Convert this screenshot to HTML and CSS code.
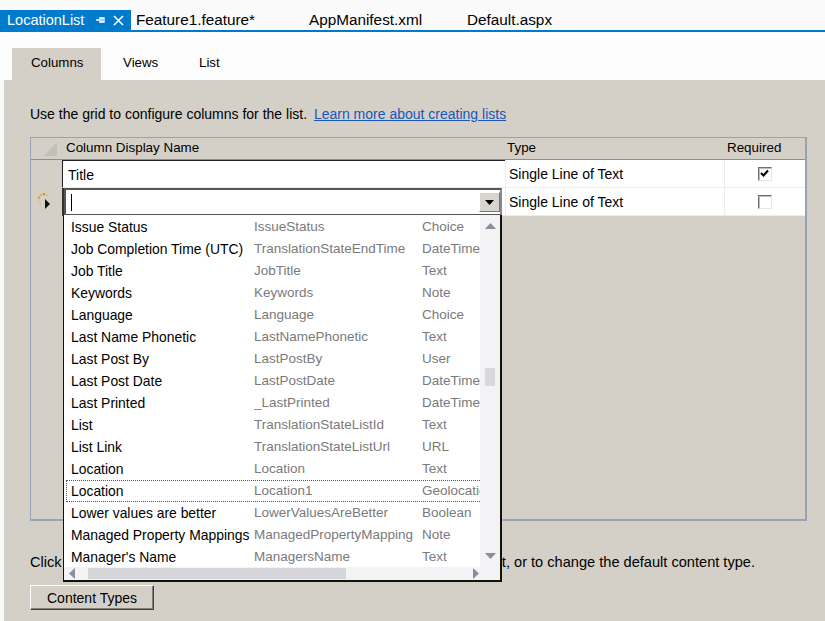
FILE: index.html
```html
<!DOCTYPE html>
<html>
<head>
<meta charset="utf-8">
<link rel="stylesheet" href="styles.css">
</head>
<body>
<div class="doc-tabs">
  <div class="doc-tab active">
    <span class="doc-title">LocationList</span>
    <svg class="pin" width="11" height="10" viewBox="0 0 11 10"><path d="M1 5h4M5 2v6M5 3h4v4H5M7 3v4" stroke="#fff" stroke-width="1.3" fill="none"/></svg>
    <svg class="close" width="13" height="13" viewBox="0 0 13 13"><path d="M2 2l9 9M11 2l-9 9" stroke="#fff" stroke-width="1.6"/></svg>
  </div>
  <div class="doc-tab t2">Feature1.feature*</div>
  <div class="doc-tab t3">AppManifest.xml</div>
  <div class="doc-tab t4">Default.aspx</div>
</div>
<div class="subtabs">
  <div class="subtab active">Columns</div>
  <div class="subtab views">Views</div>
  <div class="subtab list">List</div>
</div>
<div class="panel">
  <p class="intro">Use the grid to configure columns for the list. <a class="link">Learn more about creating lists</a></p>
  <div class="grid">
    <div class="grow header">
      <div class="c-ind"><svg width="14" height="14" viewBox="0 0 14 14"><polygon points="13,0 13,14 0,14" fill="#c2c0bb"/></svg></div>
      <div class="c-name">Column Display Name</div>
      <div class="c-type">Type</div>
      <div class="c-req">Required</div>
    </div>
    <div class="grow row">
      <div class="c-ind"></div>
      <div class="c-name title-cell">Title</div>
      <div class="c-type">Single Line of Text</div>
      <div class="c-req"><span class="chk"><svg width="11" height="11" viewBox="0 0 11 11"><path d="M2 5l2.5 2.5L9 2.5" stroke="#000" stroke-width="2" fill="none"/></svg></span></div>
    </div>
    <div class="grow row">
      <div class="c-ind">
        <svg class="newrow" width="16" height="18" viewBox="0 0 16 18">
          <circle cx="5" cy="3" r="1.2" fill="#d9b54a"/>
          <circle cx="8" cy="2.2" r="1.2" fill="#c99a30"/>
          <circle cx="11" cy="3.2" r="1.1" fill="#e0c070"/>
          <circle cx="3" cy="5.5" r="1.2" fill="#c9a040"/>
          <circle cx="2.5" cy="8.5" r="1.1" fill="#e2c780"/>
          <circle cx="4" cy="11" r="1" fill="#d8bd70"/>
          <circle cx="7" cy="5.5" r="1" fill="#e8d7a0"/>
          <polygon points="9,7 9,17 14,12" fill="#111"/>
        </svg>
      </div>
      <div class="c-name edit-cell">
        <div class="combo">
          <span class="caret"></span>
          <span class="combo-btn"><svg width="9" height="5" viewBox="0 0 9 5"><polygon points="0,0 9,0 4.5,5" fill="#000"/></svg></span>
        </div>
        <div class="dropdown">
          <div class="dd-body">
            <ul class="dd-list">
              <li><span>Issue Status</span><span>IssueStatus</span><span>Choice</span></li>
              <li><span>Job Completion Time (UTC)</span><span>TranslationStateEndTime</span><span>DateTime</span></li>
              <li><span>Job Title</span><span>JobTitle</span><span>Text</span></li>
              <li><span>Keywords</span><span>Keywords</span><span>Note</span></li>
              <li><span>Language</span><span>Language</span><span>Choice</span></li>
              <li><span>Last Name Phonetic</span><span>LastNamePhonetic</span><span>Text</span></li>
              <li><span>Last Post By</span><span>LastPostBy</span><span>User</span></li>
              <li><span>Last Post Date</span><span>LastPostDate</span><span>DateTime</span></li>
              <li><span>Last Printed</span><span>_LastPrinted</span><span>DateTime</span></li>
              <li><span>List</span><span>TranslationStateListId</span><span>Text</span></li>
              <li><span>List Link</span><span>TranslationStateListUrl</span><span>URL</span></li>
              <li><span>Location</span><span>Location</span><span>Text</span></li>
              <li class="focus"><span>Location</span><span>Location1</span><span>Geolocation</span></li>
              <li><span>Lower values are better</span><span>LowerValuesAreBetter</span><span>Boolean</span></li>
              <li><span>Managed Property Mappings</span><span>ManagedPropertyMapping</span><span>Note</span></li>
              <li><span>Manager's Name</span><span>ManagersName</span><span>Text</span></li>
            </ul>
            <div class="vscroll">
              <svg width="11" height="6" viewBox="0 0 11 6"><polygon points="0,6 11,6 5.5,0" fill="#8c8c9c"/></svg>
              <div class="vtrack"><span class="vthumb"></span></div>
              <svg width="11" height="6" viewBox="0 0 11 6"><polygon points="0,0 11,0 5.5,6" fill="#8c8c9c"/></svg>
            </div>
          </div>
          <div class="hscroll">
            <svg width="6" height="11" viewBox="0 0 6 11"><polygon points="6,0 6,11 0,5.5" fill="#8c8c9c"/></svg>
            <div class="htrack"><span class="hthumb"></span></div>
            <svg width="6" height="11" viewBox="0 0 6 11"><polygon points="0,0 0,11 6,5.5" fill="#8c8c9c"/></svg>
            <span class="corner"></span>
          </div>
        </div>
      </div>
      <div class="c-type">Single Line of Text</div>
      <div class="c-req"><span class="chk"></span></div>
    </div>
  </div>
  <p class="outro">Click Content Types to add or delete content types associated with the list, or to change the default content type.</p>
  <button class="btn">Content Types</button>
</div>
</body>
</html>
```
FILE: styles.css
```css
* { box-sizing: border-box; }
html, body { margin: 0; padding: 0; }
body {
  width: 825px;
  height: 621px;
  overflow: hidden;
  background: #fafafa;
  font-family: "Liberation Sans", Arial, sans-serif;
  font-size: 14px;
  color: #000;
}
.doc-tabs {
  display: flex;
  height: 32px;
  padding-top: 10px;
  border-bottom: 2px solid #007acc;
  font-size: 15.3px;
}
.doc-tab {
  height: 20px;
  line-height: 20px;
  white-space: nowrap;
}
.doc-tab.active {
  background: #007acc;
  color: #fff;
  width: 131px;
  padding-left: 7px;
  display: flex;
  align-items: center;
}
.doc-title { width: 88px; font-size: 14.5px; }
.pin { margin-right: 6px; }
.t2 { margin-left: 5px; width: 173px; }
.t3 { width: 158px; }
.subtabs {
  display: flex;
  padding: 16px 0 0 12px;
  height: 48px;
  background: #fcfcfc;
}
.subtab {
  height: 32px;
  line-height: 30px;
  font-size: 13.3px;
}
.subtab.active {
  background: #d4d0c8;
  width: 89px;
  padding-left: 19px;
}
.subtab.views { padding-left: 22px; width: 98px; }
.panel {
  margin-left: 4px;
  height: 541px;
  background: #d4d0c8;
  padding: 24px 18px 0 26px;
  display: flex;
  flex-direction: column;
  align-items: flex-start;
}
.intro {
  margin: 0;
  height: 20px;
  line-height: 20px;
  font-size: 14px;
}
.link {
  color: #1a55b8;
  text-decoration: underline;
  margin-left: 3px;
}
.grid {
  margin-top: 13px;
  width: 777px;
  height: 384px;
  border: 1px solid #98a2b4;
  border-width: 1px 2px 2px 1px;
  display: flex;
  flex-direction: column;
}
.grow { display: flex; }
.c-ind { width: 31px; flex: none; position: relative; }
.c-name { width: 443px; flex: none; position: relative; }
.c-type { width: 219px; flex: none; }
.c-req { flex: 1; }
.header { height: 22px; line-height: 20px; border-bottom: 1px solid #8e8e8e; font-size: 13.4px; }
.header .c-ind { display: flex; justify-content: flex-end; align-items: flex-end; padding: 0 4px 3px 0; }
.header .c-name { padding-left: 4px; }
.header .c-type { padding-left: 2px; }
.header .c-req { padding-left: 3px; }
.row { height: 28px; line-height: 28px; }
.row .c-name, .row .c-type, .row .c-req { background: #fff; border-bottom: 1px solid #ececec; }
.row .c-type { padding-left: 3px; border-left: 1px solid #ececec; }
.row .c-req { border-left: 1px solid #ececec; display: flex; justify-content: center; align-items: center; }
.title-cell { padding-left: 5px; border-left: 1px solid #222; border-top: 1px solid #222; }
.edit-cell { border-left: 2px solid #333; }
.combo {
  position: absolute;
  left: 0; top: 0;
  width: 438px; height: 28px;
  border: 2px solid #555;
  border-right-color: #888;
  background: #fff;
  display: flex;
  align-items: center;
  justify-content: space-between;
}
.caret { width: 1px; height: 17px; background: #000; margin-left: 5px; }
.combo-btn {
  width: 21px; height: 20px;
  background: #d8d5cf;
  border: 1px solid;
  border-color: #fff #777 #777 #fff;
  display: flex; align-items: center; justify-content: center;
}
.chk {
  width: 14px; height: 14px;
  background: #fff;
  border: 1px solid;
  border-color: #6e6e6e #e6e6e6 #e6e6e6 #6e6e6e;
  box-shadow: inset 1px 1px 0 #bdbdbd;
  display: flex; align-items: center; justify-content: center;
  margin-right: 1px;
}
.newrow { position: absolute; left: 5px; top: 4px; }
.dropdown {
  position: absolute;
  left: -1px; top: 27px;
  width: 439px; height: 367px;
  background: #fff;
  border: 1px solid #111;
  border-width: 0 2px 2px 1px;
  display: flex;
  flex-direction: column;
  z-index: 5;
}
.dd-body { display: flex; height: 352px; }
.dd-list {
  list-style: none;
  margin: 0; padding: 1px 0 0 2px;
  width: 416px;
  overflow: hidden;
}
.dd-list li {
  display: flex;
  height: 22px;
  line-height: 22px;
  padding-left: 5px;
  white-space: nowrap;
  font-size: 13.9px;
}
.dd-list li span:nth-child(1) { width: 183px; flex: none; }
.dd-list li span:nth-child(2) { width: 168px; flex: none; color: #7a7a7a; font-size: 13.5px; }
.dd-list li span:nth-child(3) { flex: none; color: #7a7a7a; font-size: 13.5px; }
.dd-list li.focus { border-top: 1px dotted #555; border-bottom: 1px dotted #555; border-left: 1px dotted #555; line-height: 20px; padding-left: 4px; }
.vscroll {
  width: 20px;
  background: #f3f3f6;
  display: flex;
  flex-direction: column;
  align-items: center;
  padding: 8px 0 8px;
}
.vtrack { flex: 1; width: 100%; position: relative; }
.vthumb { position: absolute; left: 5px; top: 139px; width: 10px; height: 18px; background: #d9d9dc; }
.hscroll {
  height: 13px;
  display: flex;
  align-items: center;
  background: #f3f3f6;
  padding-left: 5px;
}
.htrack { width: 392px; height: 11px; position: relative; margin: 0 3px; }
.hthumb { position: absolute; left: 10px; top: 0; width: 258px; height: 11px; background: #d6d6da; }
.corner { flex: 1; height: 13px; background: #f3f3f6; }
.outro {
  margin: 32px 0 0 0;
  height: 18px;
  line-height: 18px;
  font-size: 14.6px;
  white-space: nowrap;
}
.btn {
  margin-top: 14px;
  width: 124px;
  height: 25px;
  background: #d4d0c8;
  border: 1px solid;
  border-color: #fff #404040 #404040 #fff;
  box-shadow: inset -1px -1px 0 #808080;
  font-family: "Liberation Sans", Arial, sans-serif;
  font-size: 14px;
  padding: 0;
  color: #000;
}
```
